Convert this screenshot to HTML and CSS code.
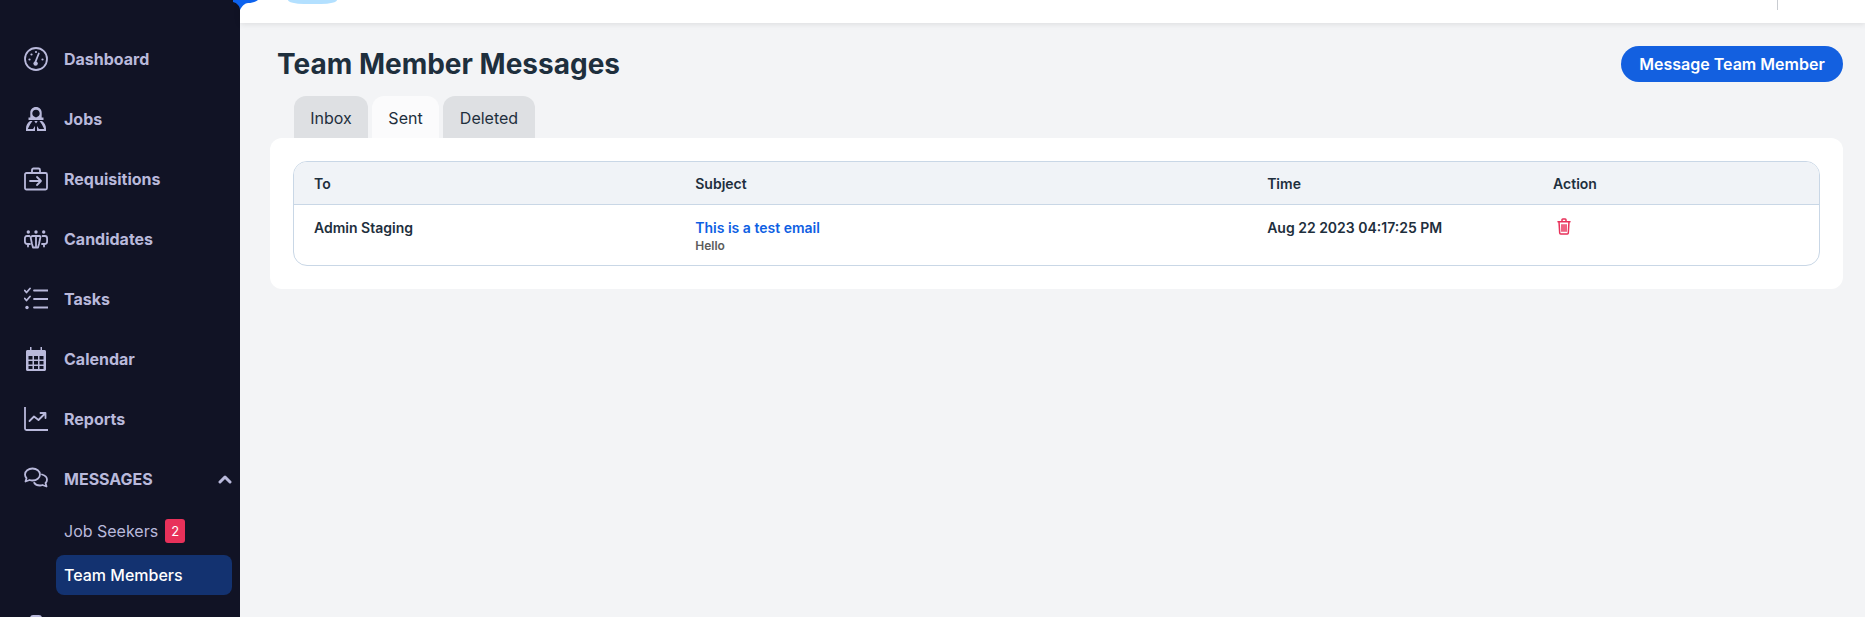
FILE: index.html
```html
<!DOCTYPE html>
<html lang="en">
<head>
<meta charset="utf-8">
<title>Team Member Messages</title>
<link rel="stylesheet" href="styles.css">
</head>
<body>
<div class="app">
  <aside class="sidebar">
    <nav class="nav">
      <a class="nav-item"><svg class="ico" viewBox="0 0 24 24"><circle cx="12" cy="12" r="11" class="s"/><path class="s" d="M11.200 15.500 14.800 6.500"/><circle cx="11.600" cy="16.600" r="2.200" class="f"/><circle cx="5.500" cy="12.500" r="1.100" class="f"/><circle cx="7.500" cy="7.500" r="1.100" class="f"/><circle cx="12" cy="5" r="1.100" class="f"/><circle cx="18.500" cy="12.500" r="1.100" class="f"/></svg><span>Dashboard</span></a>
      <a class="nav-item"><svg class="ico" viewBox="0 0 24 24"><path class="f" fill-rule="evenodd" d="M12 0c3.500 0 5.700 2.500 5.700 5.800V10.500h1.800v2.600h-15v-2.600h1.800V5.800C6.300 2.500 8.500 0 12 0Zm0 2.800c-2.200 0-3.700 1.500-3.700 3.700 0 2.100 1.600 3.300 3.700 4 2.100-.7 3.700-1.900 3.700-4 0-2.200-1.500-3.700-3.700-3.700Z"/><path class="f" fill-rule="evenodd" d="M6 14h2.500L6.200 17.200 3.800 22h5.200L11 19V24H2v-2.500C2 18.500 3.500 15.500 6 14ZM18 14h-2.500l2.300 3.200L20.200 22H15L13 19V24H22v-2.500c0-3-1.500-6-4-7.500ZM10.300 14h3.400L12 16.500Z"/></svg><span>Jobs</span></a>
      <a class="nav-item"><svg class="ico" viewBox="0 0 24 24"><rect x="1" y="6" width="22" height="16.500" rx="1.500" class="s"/><path class="s" d="M8 6V3a1.500 1.500 0 0 1 1.500-1.500h5A1.500 1.500 0 0 1 16 3v3M6 14h11M13 10l4 4-4 4"/></svg><span>Requisitions</span></a>
      <a class="nav-item"><svg class="ico" viewBox="0 0 24 24"><circle cx="12" cy="5" r="1.700" class="f"/><circle cx="4.300" cy="5" r="1.700" class="f"/><circle cx="19.700" cy="5" r="1.700" class="f"/><path class="s" d="M8.500 9h7c.6 0 1 .5.900 1.200l-1.400 6.800-1 3.500h-5l-1-3.500-1.400-6.800C7.500 9.500 7.900 9 8.500 9Z"/><path class="s" d="M12 10v9.500"/><path class="s" d="M5.500 9H3C1.500 9 .9 10 .9 11.500v3C.9 16 2 17 3.500 17H6M18.500 9H21c1.500 0 2.100 1 2.100 2.500v3c0 1.500-1.100 2.500-2.600 2.500H18M4 17v2.500M20 17v2.500"/></svg><span>Candidates</span></a>
      <a class="nav-item"><svg class="ico" viewBox="0 0 24 24"><path class="s" d="M.8 3.500 2.500 5.500 6 1.500M.8 11.500 2.500 13.500 6 9.500M10 3.500h14M10 12h14M10 20.500h14"/><circle cx="3" cy="20.500" r="1.700" class="f"/></svg><span>Tasks</span></a>
      <a class="nav-item"><svg class="ico" viewBox="0 0 24 24"><path class="f" fill-rule="evenodd" d="M6 0h1.500v3H16.500V0H18v3h2.500c.9 0 1.500.7 1.500 1.500V22.500c0 .9-.7 1.500-1.500 1.500h-17C2.600 24 2 23.300 2 22.500V4.500C2 3.700 2.600 3 3.500 3H6ZM4.500 9v3.500h4V9Zm5.500 0v3.500h4V9Zm5.500 0v3.500h4V9ZM4.500 14v3.500h4V14Zm5.500 0v3.500h4V14Zm5.500 0v3.500h4V14ZM4.500 19v3h4v-3Zm5.500 0v3h4v-3Zm5.500 0v3h4v-3Z"/></svg><span>Calendar</span></a>
      <a class="nav-item"><svg class="ico" viewBox="0 0 24 24"><path class="s" d="M1 0v21.500c0 1 .6 1.500 1.500 1.500H24"/><path class="s" d="M5.500 14 10 9.500 14.500 13 21 6.500M16.500 6H21.500V11"/></svg><span>Reports</span></a>
      <a class="nav-item"><svg class="ico" viewBox="0 0 24 24"><path class="s" d="M8.500 1.500c4.200 0 7.500 2.600 7.500 6s-3.300 6-7.500 6c-1 0-2-.2-2.900-.5L1.500 14.500l1-3.300C1.500 10.100 1 8.900 1 7.500c0-3.400 3.300-6 7.500-6Z"/><path class="s" d="M18 7.500c3 .8 5 2.800 5 5.200 0 1.300-.5 2.400-1.500 3.300l1 3.500-4-1.500c-.8.300-1.700.5-2.500.5-2.600 0-4.800-1.100-5.800-2.800"/></svg><span class="nav-upper">MESSAGES</span><svg class="chev" viewBox="0 0 14 10"><path d="M2 8 7 3l5 5"/></svg></a>
    </nav>
    <div class="subnav">
      <a class="sub-item">Job Seekers<span class="badge">2</span></a>
      <a class="sub-item active">Team Members</a>
    </div>
    <div class="cut-icon"></div>
  </aside>
  <div class="content">
    <header class="topbar">
      <svg class="logo-tip" viewBox="0 0 25 10"><path d="M0 0H25C22 2 19 3 15 3 12 3 9 6 7 10 7 6 4 3 0 2Z"/></svg>
      <span class="avatar-tip"></span>
      <span class="top-divider"></span>
    </header>
    <main class="page">
      <div class="page-head">
        <h1>Team Member Messages</h1>
        <a class="btn">Message Team Member</a>
      </div>
      <div class="tabs">
        <a class="tab">Inbox</a>
        <a class="tab current">Sent</a>
        <a class="tab">Deleted</a>
      </div>
      <section class="card">
        <div class="tbl">
          <div class="row head">
            <div>To</div><div>Subject</div><div>Time</div><div>Action</div>
          </div>
          <div class="row body">
            <div>Admin Staging</div>
            <div><a class="subject">This is a test email</a><p class="preview">Hello</p></div>
            <div>Aug 22 2023 04:17:25 PM</div>
            <div><svg class="trash" viewBox="0 0 14 17"><path d="M1 3.800h12M5 3.500V1.800c0-.5.300-.8.800-.8h2.400c.5 0 .8.300.8.800v1.700M2 3.800l.7 11.200c0 .6.500 1 1 1h6.600c.5 0 1-.4 1-1L12 3.800M5 6.800v6.400M7 6.800v6.400M9 6.800v6.400"/></svg></div>
          </div>
        </div>
      </section>
    </main>
  </div>
</div>
</body>
</html>
```
FILE: styles.css
```css
* { box-sizing: border-box; }
html, body { margin: 0; height: 617px; overflow: hidden; }
body { font-family: Inter, "Liberation Sans", sans-serif; background: #f3f4f6; color: #1e2f3d; }
.app { display: flex; height: 617px; }

.sidebar { width: 240px; flex: none; background: #111325; position: relative; overflow: hidden; padding-top: 28.500px; }
.nav { display: flex; flex-direction: column; }
.nav-item { height: 60px; display: flex; align-items: center; gap: 16px; padding: 0 8px 0 24px; color: #b9b9db; font-size: 16px; font-weight: 700; }
.nav-upper { flex: 1; }
.ico { width: 24px; height: 24px; flex: none; }
.s { fill: none; stroke: #b9b9db; stroke-width: 1.800; stroke-linecap: round; stroke-linejoin: round; }
.f { fill: #b9b9db; }
.chev { width: 14px; height: 10px; flex: none; fill: none; stroke: #b9b9db; stroke-width: 3; stroke-linecap: round; stroke-linejoin: round; }
.subnav { display: flex; flex-direction: column; gap: 4px; padding: 2.500px 8px 0 56px; }
.sub-item { height: 40px; display: flex; align-items: center; gap: 7px; padding-left: 8px; color: #b9b9db; font-size: 16px; border-radius: 8px; }
.sub-item.active { background: #133270; color: #fff; font-weight: 500; }
.badge { width: 20px; height: 24px; border-radius: 3px; background: #e8315a; color: #fff; font-size: 13px; display: flex; align-items: center; justify-content: center; }
.cut-icon { position: absolute; left: 30px; top: 615px; width: 12px; height: 8px; background: #b9b9db; border-radius: 3px; }

.content { flex: 1; min-width: 0; display: flex; flex-direction: column; }
.topbar { height: 23px; flex: none; background: #fff; box-shadow: 0 1px 6px rgba(0,0,0,.1); position: relative; }
.logo-tip { position: absolute; left: -7px; top: 0; width: 25px; height: 10px; fill: #0c62ee; }
.avatar-tip { position: absolute; left: 48px; top: 0; width: 49px; height: 4px; background: #b3e0ff; border-radius: 0 0 16px 16px / 0 0 4px 4px; }
.top-divider { position: absolute; left: 1537px; top: 0; width: 1px; height: 10px; background: #c9ccd1; }

.page { flex: 1; padding: 23px 22px 0 29px; }
.page-head { display: flex; justify-content: space-between; align-items: center; height: 36px; padding-left: 8px; }
h1 { margin: 0; font-size: 28px; font-weight: 700; line-height: 36px; color: #1e2f3d; }
.btn { height: 36px; width: 222px; display: flex; align-items: center; justify-content: center; border-radius: 18px; background: #1360e0; color: #fff; font-size: 16px; font-weight: 600; }
.tabs { display: flex; gap: 4px; margin-top: 14px; padding-left: 25px; height: 42px; }
.tab { width: 74px; display: flex; align-items: center; justify-content: center; padding-top: 1px; border-radius: 12px 12px 0 0; background: #dee0e3; font-size: 16px; color: #1e2f3d; }
.tab.current { width: 67px; background: #fbfbfc; }
.tab:last-child { width: 92px; }
.card { margin-left: 1px; background: #fff; border-radius: 12px; height: 151px; padding: 23px; }
.tbl { border: 1px solid #c9d7e6; border-radius: 14px; overflow: hidden; font-size: 14px; font-weight: 600; height: 105px; }
.row { display: grid; grid-template-columns: 4fr 6fr 3fr 3fr; }
.row > div { padding-left: 20px; }
.head { height: 43px; padding-top: 1px; align-items: center; background: #f0f3f7; border-bottom: 1px solid #c9d7e6; }
.body { padding-top: 13px; line-height: 20px; }
.subject { color: #0f5fe3; display: block; }
.preview { margin: 0; font-size: 12px; line-height: 16px; color: #5c5c5c; }
.trash { width: 14px; height: 17px; margin: 0 0 0 3.500px; display: block; fill: none; stroke: #e8315a; stroke-width: 1.500; stroke-linecap: round; stroke-linejoin: round; }
```
